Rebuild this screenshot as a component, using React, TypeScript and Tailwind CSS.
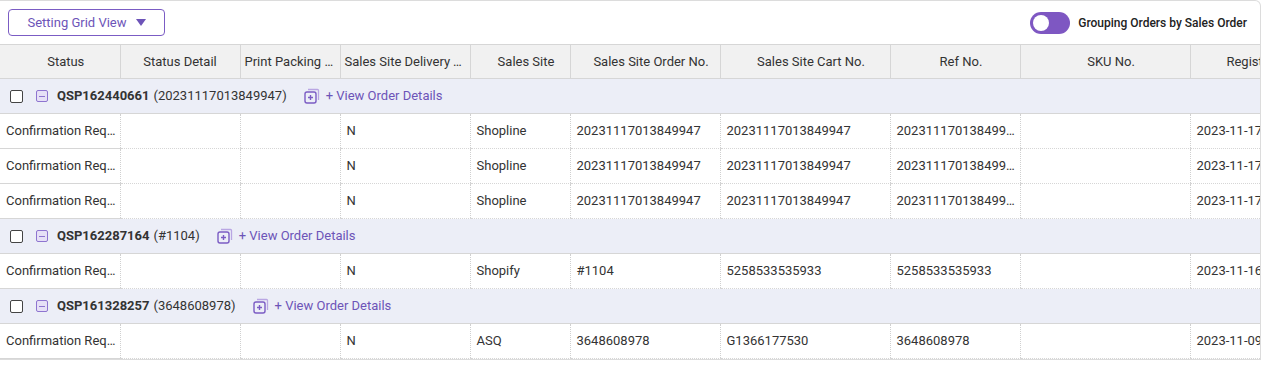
import React from "react";

const columns: { label: string; width: number; shift: boolean }[] = [
  { label: "Status", width: 120, shift: true },
  { label: "Status Detail", width: 120, shift: false },
  { label: "Print Packing List", width: 100, shift: false },
  { label: "Sales Site Delivery Type", width: 130, shift: false },
  { label: "Sales Site", width: 100, shift: true },
  { label: "Sales Site Order No.", width: 150, shift: true },
  { label: "Sales Site Cart No.", width: 170, shift: true },
  { label: "Ref No.", width: 130, shift: true },
  { label: "SKU No.", width: 170, shift: true },
  { label: "Register Date", width: 150, shift: false },
];

type Row = string[];
type Group = { order: string; sub: string; rows: Row[] };

const groups: Group[] = [
  {
    order: "QSP162440661",
    sub: "20231117013849947",
    rows: [0, 1, 2].map(() => [
      "Confirmation Required",
      "",
      "",
      "N",
      "Shopline",
      "20231117013849947",
      "20231117013849947",
      "20231117013849947",
      "",
      "2023-11-17 10:21",
    ]),
  },
  {
    order: "QSP162287164",
    sub: "#1104",
    rows: [
      [
        "Confirmation Required",
        "",
        "",
        "N",
        "Shopify",
        "#1104",
        "5258533535933",
        "5258533535933",
        "",
        "2023-11-16 09:12",
      ],
    ],
  },
  {
    order: "QSP161328257",
    sub: "3648608978",
    rows: [
      [
        "Confirmation Required",
        "",
        "",
        "N",
        "ASQ",
        "3648608978",
        "G1366177530",
        "3648608978",
        "",
        "2023-11-09 14:40",
      ],
    ],
  },
];

function DetailIcon() {
  return (
    <svg width="18" height="18" viewBox="0 0 18 18" fill="none" className="shrink-0">
      <path d="M5 2.5h9.5a1 1 0 0 1 1 1V13" stroke="#b9a6e3" strokeWidth="1.3" />
      <rect x="2" y="5" width="11" height="11" rx="2" stroke="#7b5cc4" strokeWidth="1.4" />
      <path d="M7.5 8v5M5 10.5h5" stroke="#7b5cc4" strokeWidth="1.4" />
    </svg>
  );
}

export default function App() {
  return (
    <div className="h-[365px] w-[1266px] overflow-hidden bg-white font-['Roboto',sans-serif] text-[13px] text-[#333]">
      <div className="w-[1261px] overflow-hidden rounded-tr-[6px] border border-l-0 border-[#dcdcdc]">
        {/* Toolbar */}
        <div className="flex h-[43px] items-center justify-between pl-2 pr-[13px]">
          <button className="flex h-[27px] w-[157px] items-center justify-center gap-[9px] rounded-[4px] border border-[#7b5cc4] text-[13px] text-[#6d54b8]">
            Setting Grid View
            <svg width="10" height="8" viewBox="0 0 10 8">
              <path d="M0 0h10L5 7z" fill="#6d54b8" />
            </svg>
          </button>
          <div className="flex items-center gap-2">
            <div className="relative h-[22px] w-[40px] rounded-full bg-[#7e57c2]">
              <div className="absolute left-[3px] top-[3px] h-4 w-4 rounded-full bg-white" />
            </div>
            <span className="text-[12px] font-medium text-[#222]">Grouping Orders by Sales Order</span>
          </div>
        </div>

        {/* Grid */}
        <table className="table-fixed border-collapse" style={{ width: columns.reduce((s, c) => s + c.width, 0) }}>
          <colgroup>
            {columns.map((c) => (
              <col key={c.label} style={{ width: c.width }} />
            ))}
          </colgroup>
          <thead>
            <tr className="h-[34px] bg-[#f1f1f1]">
              {columns.map((c, i) => (
                <th
                  key={c.label}
                  className={`truncate border-t border-b border-[#d6d6d6] text-center text-[13px] font-normal text-[#333] ${i > 0 ? "border-l" : ""} ${c.shift ? "pl-[14px] pr-[2px]" : "px-1"}`}
                >
                  {c.label}
                </th>
              ))}
            </tr>
          </thead>
          <tbody>
            {groups.map((g) => (
              <React.Fragment key={g.order}>
                <tr className="h-[35px] bg-[#eceef7]">
                  <td colSpan={columns.length} className="border-b border-[#d6d6d6] p-0">
                    <div className="flex items-center pl-[10px]">
                      <span className="h-[13px] w-[13px] rounded-[2px] border border-[#444] bg-white" />
                      <span className="ml-[13px] flex h-[12px] w-[12px] items-center justify-center rounded-[2px] border border-[#8e74d0] bg-[#e6e0f6]">
                        <span className="h-px w-[6px] bg-[#8e74d0]" />
                      </span>
                      <span className="ml-[9px] font-bold text-[#333]">{g.order}</span>
                      <span className="ml-1 text-[#333]">({g.sub})</span>
                      <span className="ml-[16px]">
                        <DetailIcon />
                      </span>
                      <span className="ml-[5px] text-[#6d54b8]">+ View Order Details</span>
                    </div>
                  </td>
                </tr>
                {g.rows.map((r, ri) => (
                  <tr key={ri} className="h-[35px] bg-white">
                    {r.map((v, ci) => (
                      <td
                        key={ci}
                        className={`truncate border-b border-[#d6d6d6] pl-[6px] pr-1 text-[13px] ${ci > 0 ? "border-l border-l-[#d0d0d0] border-dotted" : ""}`}
                      >
                        {v}
                      </td>
                    ))}
                  </tr>
                ))}
              </React.Fragment>
            ))}
          </tbody>
        </table>
      </div>
    </div>
  );
}
